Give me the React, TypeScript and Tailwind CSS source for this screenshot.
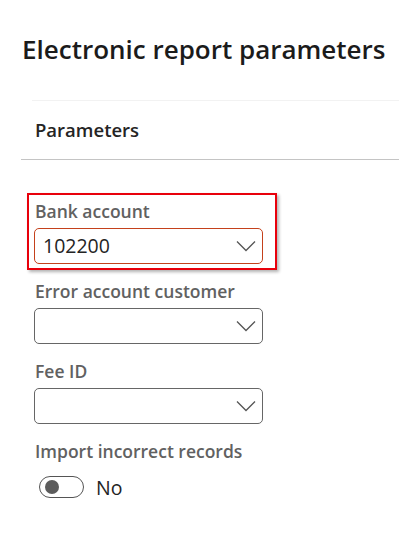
const FIELDS = [
  { label: "Error account customer", value: "" },
  { label: "Fee ID", value: "" },
];

function Chevron() {
  return (
    <svg width="20" height="12" viewBox="0 0 20 12" className="shrink-0">
      <path d="M1 1.5 L10 10.5 L19 1.5" fill="none" stroke="#555" strokeWidth="1.3" />
    </svg>
  );
}

function Lookup({ value, error }: { value: string; error?: boolean }) {
  return (
    <div
      className={`h-9 w-[229px] flex items-center justify-between pl-[8px] pr-[6px] rounded-[5px] border ${
        error ? "border-[#c4411c]" : "border-[#666]"
      }`}
    >
      <span className="text-[19.5px] leading-none text-[#242424]">{value}</span>
      <Chevron />
    </div>
  );
}

function Label({ children }: { children: React.ReactNode }) {
  return <div className="text-[17.5px] leading-5 font-semibold text-[#616161] mb-[7px]">{children}</div>;
}

export default function App() {
  return (
    <div className="w-[399px] h-[539px] bg-white overflow-hidden" style={{ fontFamily: '"Open Sans", sans-serif' }}>
      <h1 className="pl-[22px] pt-[31px] text-[26px] leading-9 font-semibold text-[#1b1b1b]">
        Electronic report parameters
      </h1>

      <div className="ml-[32px] mt-[33px] border-t border-[#f2f2f2]" />
      <div className="pl-[35px] pt-[17px] pb-[17px] text-[18.5px] leading-6 font-semibold text-[#242424]">
        Parameters
      </div>
      <div className="ml-[21px] border-t border-[#c4c4c4]" />

      <div className="pl-[34px] pt-[41px] flex flex-col">
        <div className="relative mb-[17px]">
          <div className="pl-[1px]">
            <Label>Bank account</Label>
          </div>
          <Lookup value="102200" error />
          <div className="absolute -left-[7px] -top-[8px] w-[250px] h-[77px] border-2 border-[#e8000b] shadow-[2px_2px_3px_rgba(0,0,0,0.3)]" />
        </div>

        {FIELDS.map((f) => (
          <div key={f.label} className="mb-[17px]">
            <div className="pl-[1px]">
              <Label>{f.label}</Label>
            </div>
            <Lookup value={f.value} />
          </div>
        ))}

        <div className="pl-[1px]">
          <Label>Import incorrect records</Label>
        </div>
        <div className="flex items-center gap-3 pl-[5px] mt-[6px]">
          <div className="w-[45px] h-[22px] rounded-full border border-[#555] flex items-center pl-[5px]">
            <div className="w-[14px] h-[14px] rounded-full bg-[#5c5c5c]" />
          </div>
          <span className="text-[19.5px] leading-6 text-[#242424] mt-[2px]">No</span>
        </div>
      </div>
    </div>
  );
}
